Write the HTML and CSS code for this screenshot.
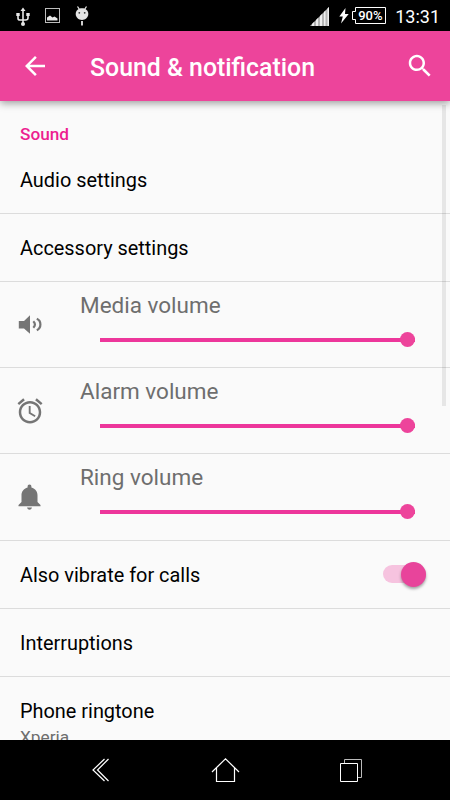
FILE: index.html
```
<!DOCTYPE html>
<html lang="en">
<head>
    <meta charset="UTF-8">
    <meta name="viewport" content="width=device-width, initial-scale=1.0">
    <title>Sound &amp; notification</title>
    <link rel="stylesheet" href="styles.css">
</head>
<body>

<div class="statusbar">
    <svg class="usb" width="14" height="20" viewBox="0 0 14 20" fill="none" stroke="#e8e8e8" stroke-width="1.6">
        <path d="M7 3v14M2 8v3.200q0 1.800 2 1.800h5.500q2.500 0 2.500-2V8"/>
        <path d="M4.500 4L7 .5 9.500 4z" fill="#e8e8e8" stroke="none"/>
        <circle cx="7" cy="17" r="2" fill="#e8e8e8" stroke="none"/>
        <path d="M.3 6h3.400v3H.3zM10.300 6h3.400v3h-3.400z" fill="#e8e8e8" stroke="none"/>
    </svg>
    <svg class="image" width="15" height="15" viewBox="0 0 15 15">
        <rect x=".5" y=".5" width="14" height="14" fill="none" stroke="#bdbdbd"/>
        <path d="M2 12.500V9.500l3-2 2.500 2 2-1 3 2v2z" fill="#e8e8e8"/>
    </svg>
    <svg class="droid" width="14" height="20" viewBox="0 0 14 20">
        <path d="M2.500 .5l2 3M11.500 .5l-2 3" stroke="#e4e4e4" stroke-width="1.300"/>
        <path d="M7 2.300c4 0 6.300 2.500 6.300 5.700S10.500 14 7 14 .7 11.200.7 8 3 2.300 7 2.300z" fill="#e4e4e4"/>
        <path d="M6 15h2v4.500H6z" fill="#cfcfcf"/>
        <circle cx="4.300" cy="6.800" r=".9" fill="#333"/>
        <circle cx="9.700" cy="6.800" r=".9" fill="#333"/>
    </svg>
    <span class="spacer"></span>
    <svg class="signal" width="19" height="19" viewBox="0 0 19 19">
        <path d="M0 19L19 0v19z" fill="#b5b5b5"/>
        <path d="M2 17l2-2v4H2zM6 13l2-2v8H6zM10 9l2-2v12h-2zM14 5l1.500-1.500V19H14zM17.500 1.500L19 0v19h-1.500z" fill="#eee"/>
    </svg>
    <svg class="bolt" width="10" height="16" viewBox="0 0 10 16">
        <path d="M6.500 0L.3 8.500h3.500L2 15.500 9.700 6H6z" fill="#fff"/>
    </svg>
    <div class="battery">
        <svg width="34" height="17" viewBox="0 0 34 17" fill="none" stroke="#fff">
            <path d="M3.500 .5h30v16h-30v-4h-3v-8h3z"/>
        </svg>
        <span class="percent">90%</span>
    </div>
    <span class="time">13:31</span>
</div>

<div class="toolbar">
    <svg width="30" height="30" viewBox="0 0 24 24" fill="#fff">
        <path d="M20 11H7.830l5.590-5.590L12 4l-8 8 8 8 1.410-1.410L7.830 13H20v-2z"/>
    </svg>
    <h1 class="title">Sound &amp; notification</h1>
    <svg width="30" height="30" viewBox="0 0 24 24" fill="#fff">
        <path d="M15.500 14h-.790l-.280-.270C15.410 12.590 16 11.110 16 9.500 16 5.910 13.090 3 9.500 3S3 5.910 3 9.500 5.910 16 9.500 16c1.610 0 3.090-.590 4.230-1.570l.270.280v.790l5 4.990L20.490 19l-4.990-5zm-6 0C7.010 14 5 11.990 5 9.500S7.010 5 9.500 5 14 7.010 14 9.500 11.990 14 9.500 14z"/>
    </svg>
</div>

<div class="content">
    <div class="category">Sound</div>
    <div class="row">Audio settings</div>
    <div class="row">Accessory settings</div>

    <div class="volume">
        <svg width="30" height="30" viewBox="0 0 30 30" fill="#757575">
            <path d="M3.800 11h5.200l6-5.700v18.400L9 18.500H3.800z"/>
            <path d="M18.300 11.300q3.200 3.200 0 6.400M21.800 8.800q3.600 1.600 3.600 5.700t-3.600 5.700" fill="none" stroke="#757575" stroke-width="2.200"/>
        </svg>
        <div class="control">
            <div class="label">Media volume</div>
            <div class="slider"><span class="thumb"></span></div>
        </div>
    </div>

    <div class="volume">
        <svg width="30" height="30" viewBox="0 0 24 24" fill="#757575">
            <path d="M22 5.720l-4.600-3.860-1.290 1.530 4.600 3.860L22 5.720zM7.880 3.390L6.600 1.860 2 5.710l1.290 1.530 4.590-3.850zM12.500 8H11v6l4.750 2.850.750-1.230-4-2.370V8zM12 4c-4.970 0-9 4.030-9 9s4.020 9 9 9c4.970 0 9-4.030 9-9s-4.030-9-9-9zm0 16c-3.870 0-7-3.130-7-7s3.130-7 7-7 7 3.130 7 7-3.130 7-7 7z"/>
        </svg>
        <div class="control">
            <div class="label">Alarm volume</div>
            <div class="slider"><span class="thumb"></span></div>
        </div>
    </div>

    <div class="volume">
        <svg width="30" height="30" viewBox="0 0 30 30" fill="#757575">
            <path d="M14.500 2.500c1.200 0 1.900.9 1.900 2v1c4 1 6.100 4.200 6.100 8v6.500l3 3v1.200h-22V23l3-3v-6.500c0-3.800 2.100-7 6.100-8v-1c0-1.100.7-2 1.900-2z"/>
            <path d="M12 25.500h5q-.5 2.300-2.500 2.300T12 25.500z"/>
        </svg>
        <div class="control">
            <div class="label">Ring volume</div>
            <div class="slider"><span class="thumb"></span></div>
        </div>
    </div>

    <div class="row">
        Also vibrate for calls
        <div class="switch"><span class="knob"></span></div>
    </div>
    <div class="row">Interruptions</div>
    <div class="row ringtone">
        Phone ringtone
        <div class="summary">Xperia</div>
    </div>
    <div class="scrollbar"></div>
</div>

<div class="navbar">
    <svg width="30" height="30" viewBox="0 0 30 30" fill="none" stroke="#fff" stroke-width="1.200">
        <path d="M19.500 4L8 15l11.500 11M23.500 4L12.500 15l11 11"/>
    </svg>
    <svg width="30" height="30" viewBox="0 0 30 30" fill="none" stroke="#fff" stroke-width="1.200">
        <path d="M2 17L15.500 3.800 29 17M6.500 13v13.500h18V13"/>
    </svg>
    <svg width="30" height="30" viewBox="0 0 30 30" fill="none" stroke="#fff">
        <path d="M9.500 8V4.500h17v18H23" stroke="#bbb"/>
        <path d="M5.500 8.500h17v18h-17z"/>
    </svg>
</div>

</body>
</html>
```
FILE: styles.css
```
* {
    box-sizing: border-box;
}
body {
    margin: 0;
    width: 450px;
    height: 800px;
    display: flex;
    flex-direction: column;
    overflow: hidden;
    background-color: #fafafa;
    color: #000;
    font-family: Roboto, sans-serif;
}
svg {
    display: block;
    flex: none;
}
.statusbar {
    display: flex;
    flex: none;
    align-items: center;
    height: 31px;
    padding: 0 10px 0 16px;
    background-color: #000;
    color: #fff;
}
.usb {
    margin: 2px 15px 0 0;
}
.image {
    margin-right: 15px;
}
.spacer {
    flex: 1;
}
.signal {
    margin: 2px 10px 0 0;
}
.bolt {
    margin-right: 3px;
}
.battery {
    position: relative;
    margin-right: 9px;
}
.percent {
    position: absolute;
    left: 6px;
    top: 0;
    font-size: 13px;
    font-weight: 500;
    line-height: 17px;
}
.time {
    margin-top: 2px;
    font-size: 18px;
}
.toolbar {
    display: flex;
    flex: none;
    align-items: center;
    height: 70px;
    padding: 0 15px 0 20px;
    background-color: #ed449b;
    color: #fff;
    box-shadow: 0 2px 8px rgba(0, 0, 0, 0.4);
    z-index: 1;
}
.title {
    flex: 1;
    margin: 3px 0 0 40px;
    font-size: 24.85px;
    font-weight: 500;
}
.content {
    position: relative;
    flex: 1;
    min-height: 0;
    overflow: hidden;
}
.category {
    height: 45px;
    padding: 23px 20px 0;
    color: #ed1e90;
    font-size: 17.2px;
    font-weight: 500;
    line-height: 20px;
}
.row {
    display: flex;
    align-items: center;
    justify-content: space-between;
    height: 68px;
    padding: 2px 24px 0 20px;
    border-bottom: 1px solid #dcdcdc;
    font-size: 19.9px;
}
.volume {
    display: flex;
    align-items: center;
    height: 86.2px;
    padding: 0 35px 0 15px;
    border-bottom: 1px solid #dcdcdc;
}
.control {
    flex: 1;
    height: 100%;
    margin-left: 35px;
}
.label {
    padding-top: 10px;
    color: #6e6e6e;
    font-size: 22.5px;
    line-height: 27px;
}
.slider {
    display: flex;
    align-items: center;
    justify-content: flex-end;
    height: 4px;
    margin: 18.5px 0 0 20px;
    background-color: #ed369b;
}
.thumb {
    width: 15px;
    height: 15px;
    border-radius: 50%;
    background-color: #ed449b;
}
.switch {
    display: flex;
    align-items: center;
    justify-content: flex-end;
    width: 43px;
    height: 18px;
    margin-top: -2px;
    border-radius: 9px;
    background-color: #f6c3df;
}
.knob {
    width: 25px;
    height: 25px;
    border-radius: 50%;
    background-color: #e8449b;
    box-shadow: 0 2px 3px rgba(0, 0, 0, 0.35);
}
.ringtone {
    display: block;
    padding-top: 22px;
    border-bottom: none;
    line-height: 26px;
}
.summary {
    color: #6e6e6e;
    font-size: 17.3px;
    line-height: 25px;
}
.scrollbar {
    position: absolute;
    top: 4px;
    right: 4px;
    width: 4px;
    height: 301px;
    background-color: rgba(0, 0, 0, 0.08);
}
.navbar {
    display: flex;
    flex: none;
    align-items: center;
    justify-content: center;
    gap: 95px;
    height: 60px;
    background-color: #000;
}
```
